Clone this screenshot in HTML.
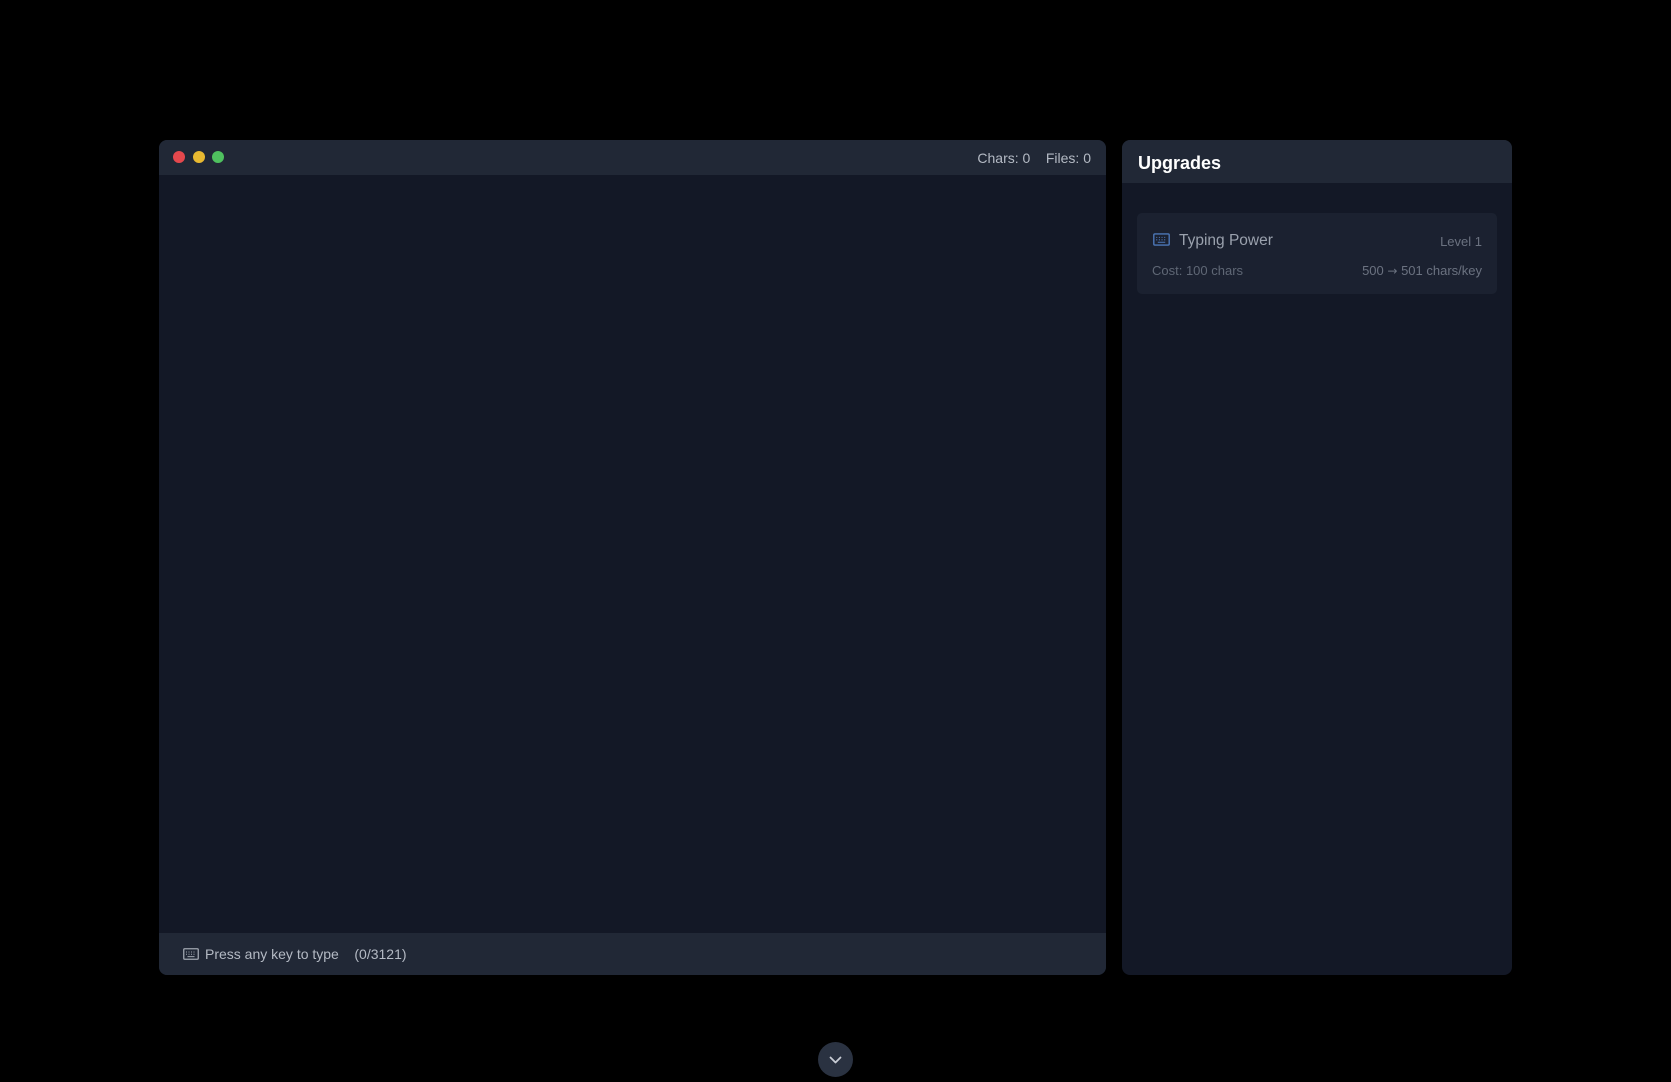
<!DOCTYPE html>
<html><head><style>
*{margin:0;padding:0;box-sizing:border-box}
body{width:1671px;height:1080px;background:#000;font-family:"Liberation Sans",sans-serif;position:relative;overflow:hidden}
.l{position:absolute;left:159px;top:140px;width:947px;height:835px;background:#131826;border-radius:8px;overflow:hidden}
.lh{height:35px;background:#212836;position:relative}
.dot{position:absolute;top:11px;width:12px;height:12px;border-radius:50%}
.stats{position:absolute;right:15px;top:10px;color:#b4bac4;font-size:14px}
.lf{position:absolute;left:0;right:0;bottom:0;height:42px;background:#212836;color:#b4bac4;font-size:14px;padding:13px 0 0 24px}
.r{position:absolute;left:1122px;top:140px;width:390px;height:835px;background:#131826;border-radius:8px;overflow:hidden}
.rh{height:43px;background:#212836;color:#fff;font-weight:bold;font-size:18px;padding:13px 16px 0}
.card{position:absolute;left:15px;top:73px;width:360px;height:81px;background:#1b2130;border-radius:5px}
.btn{position:absolute;left:818px;top:1042px;width:35px;height:35px;border-radius:50%;background:#2a3241}
</style></head><body>
<div class="l">
 <div class="lh">
  <div class="dot" style="left:14px;background:#e5484d"></div>
  <div class="dot" style="left:34px;background:#e8b931"></div>
  <div class="dot" style="left:53px;background:#4fc15f"></div>
  <div class="stats">Chars: 0 &nbsp;&nbsp; Files: 0</div>
 </div>
 <div class="lf"><svg width="16" height="12" viewBox="0 0 16 12" style="vertical-align:-1px;margin-right:6px"><rect x="0.75" y="0.75" width="14.5" height="10.5" rx="1" fill="none" stroke="#a0a6b0" stroke-width="1.3"/><path d="M3 4h1M5.5 4h1M8 4h1M10.5 4h1M3 6.3h1M5.5 6.3h1M8 6.3h1M10.5 6.3h1M4.5 8.6h7" stroke="#a0a6b0" stroke-width="1"/></svg>Press any key to type &nbsp;&nbsp; (0/3121)</div>
</div>
<div class="r">
 <div class="rh">Upgrades</div>
 <div class="card">
  <svg width="17" height="13" viewBox="0 0 16 12" style="position:absolute;left:16px;top:20px"><rect x="0.75" y="0.75" width="14.5" height="10.5" rx="1" fill="none" stroke="#4d78b8" stroke-width="1.3"/><path d="M3 4h1M5.5 4h1M8 4h1M10.5 4h1M3 6.3h1M5.5 6.3h1M8 6.3h1M10.5 6.3h1M4.5 8.6h7" stroke="#4d78b8" stroke-width="1"/></svg>
  <div style="position:absolute;left:42px;top:19px;color:#9aa1ad;font-size:15.5px">Typing Power</div>
  <div style="position:absolute;right:15px;top:21px;color:#6b7280;font-size:13px">Level 1</div>
  <div style="position:absolute;left:15px;top:50px;color:#5f6775;font-size:13px">Cost: 100 chars</div>
  <div style="position:absolute;right:15px;top:50px;color:#6b7280;font-size:13px">500 <span style="font-family:'DejaVu Sans',sans-serif;font-size:12px">→</span> 501 chars/key</div>
 </div>
</div>
<div class="btn"><svg width="35" height="35" viewBox="0 0 35 35"><path d="M12.5 15.5l5 5 5-5" fill="none" stroke="#c8ccd4" stroke-width="1.8" stroke-linecap="round" stroke-linejoin="round"/></svg></div>
</body></html>
